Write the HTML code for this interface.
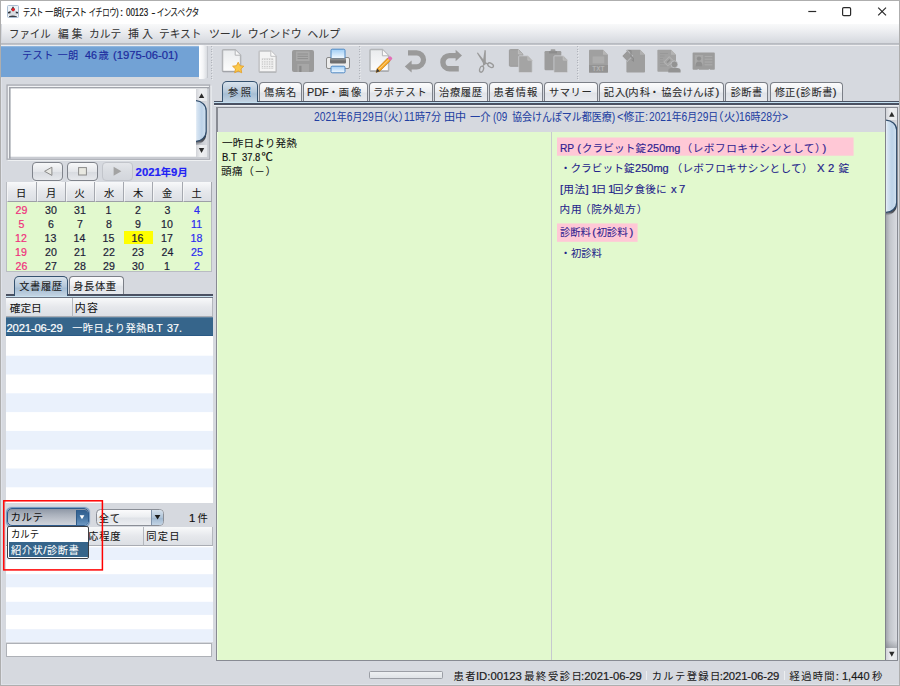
<!DOCTYPE html>
<html lang="ja">
<head>
<meta charset="utf-8">
<title>テスト 一朗(テスト イチロウ) : 00123 - インスペクタ</title>
<style>
*{box-sizing:border-box;margin:0;padding:0}
html,body{width:900px;height:686px;overflow:hidden;background:#d6d9df}
body{position:relative;font-family:"Liberation Sans","Noto Sans CJK JP",sans-serif;font-size:11.3px;color:#000;line-height:1}
body>div,body>span,body>svg{position:absolute}
span{white-space:pre;line-height:1;-webkit-text-stroke:0.2px currentColor}
.tab{border:1px solid #7b7f87;border-bottom:none;border-radius:4px 4px 0 0;background:linear-gradient(#fcfcfd 0%,#eceef1 45%,#e0e3e8 55%,#e9ebef 100%)}
.tabsel{border:1px solid #35526f;border-bottom:none;border-radius:5px 5px 0 0;background:linear-gradient(#d9e3ec 0%,#b4c7d9 50%,#a5bdd3 60%,#c3d3e2 100%)}
.th{background:linear-gradient(#f8f9fa 0%,#e6e8ec 50%,#dcdfe4 100%);border-right:1px solid #b4b7bd;border-bottom:1px solid #a9acb3}
.btn{border:1px solid #7f838b;border-radius:4px;background:linear-gradient(#f7f8f9 0%,#e4e6ea 50%,#d8dbe0 55%,#e6e8ec 100%);box-shadow:0 1px 0 rgba(255,255,255,.6)}
span b{-webkit-text-stroke:0.06px currentColor}

</style>
</head>
<body>
<div style="left:0px;top:0px;width:900px;height:686px;background:#d6d9df"></div>
<div style="left:1px;top:1px;width:898px;height:23px;background:#fff"></div>
<svg style="left:7px;top:5px" width="12" height="13" viewBox="0 0 12 13"><rect x="0.5" y="0.5" width="11" height="12" rx="1" fill="#eef3f8" stroke="#a9bdd2"/><path d="M6 1.5 L9 6 L10.5 10.5 L1.5 10.5 L3 6 Z" fill="#d9dde2"/><path d="M6 1.2 L8 4.5 L6 6.5 L4 4.5 Z" fill="#2b2f33"/><circle cx="6.2" cy="4.6" r="1.6" fill="#e8202a"/><path d="M1 7 L3.5 6 L3.5 8.2 L1 8.5 Z M8.8 6.5 L11 7 L11 8.6 L8.8 8.2 Z" fill="#30343a"/><path d="M2 11.2 Q6 9.6 10 11.6 L10 12 L2 12 Z" fill="#3a3e44"/></svg>
<span style="left:23.0px;top:7px;font-size:11.3px;transform:scaleX(0.746);transform-origin:0 0;color:#111;font-feature-settings:'palt';"><b style="font-weight:inherit;font-size:10.28px">テスト</b> </span>
<span style="left:45.2px;top:7px;font-size:11.3px;transform:scaleX(0.816);transform-origin:0 0;color:#111;font-feature-settings:'palt';"><b style="font-weight:inherit;font-size:10.28px">一朗</b>(<b style="font-weight:inherit;font-size:10.28px">テスト</b> </span>
<span style="left:89.1px;top:7px;font-size:11.3px;transform:scaleX(0.72);transform-origin:0 0;color:#111;font-feature-settings:'palt';"><b style="font-weight:inherit;font-size:10.28px">イチロウ</b>) </span>
<span style="left:120.1px;top:7px;font-size:11.3px;color:#111;font-feature-settings:'palt';">: </span>
<span style="left:126.3px;top:7px;font-size:11.3px;transform:scaleX(0.706);transform-origin:0 0;color:#111;font-feature-settings:'palt';">00123 </span>
<span style="left:151.6px;top:7px;font-size:11.3px;color:#111;font-feature-settings:'palt';">- </span>
<span style="left:157.4px;top:7px;font-size:11.3px;transform:scaleX(0.763);transform-origin:0 0;color:#111;font-feature-settings:'palt';"><b style="font-weight:inherit;font-size:10.28px">インスペクタ</b></span>
<svg style="left:800px;top:1px" width="99" height="23" viewBox="0 0 99 23"><g stroke="#2a2a2a" stroke-width="1.2" fill="none"><path d="M8.3 10.5 H16.2"/><rect x="42.6" y="6.6" width="8" height="8" rx="1.2"/><path d="M78.2 6.6 L86 14.4 M86 6.6 L78.2 14.4"/></g></svg>
<div style="left:2px;top:24px;width:897px;height:19px;background:linear-gradient(#f8f9fa 0%,#f1f2f4 25%,#e4e6ea 60%,#d5d8de 100%)"></div>
<div style="left:1px;top:43px;width:898px;height:2px;background:linear-gradient(#b4b7bd,#c3c6cc)"></div>
<div style="left:1px;top:45px;width:898px;height:1px;background:#eeeef0"></div>
<span style="left:9.0px;top:29px;font-size:11.3px;transform:scaleX(0.952);transform-origin:0 0;color:#333;"><b style="font-weight:inherit;font-size:10.96px">ファイル</b> </span>
<span style="left:57.6px;top:29px;font-size:11.3px;transform:scaleX(0.976);transform-origin:0 0;color:#333;"><b style="font-weight:inherit;font-size:10.96px">編</b> <b style="font-weight:inherit;font-size:10.96px">集</b> </span>
<span style="left:89.0px;top:29px;font-size:11.3px;transform:scaleX(0.981);transform-origin:0 0;color:#333;"><b style="font-weight:inherit;font-size:10.96px">カルテ</b> </span>
<span style="left:128px;top:29px;font-size:11.3px;color:#333;"><b style="font-weight:inherit;font-size:10.96px">挿</b> <b style="font-weight:inherit;font-size:10.96px">入</b> </span>
<span style="left:159.0px;top:29px;font-size:11.3px;transform:scaleX(0.976);transform-origin:0 0;color:#333;"><b style="font-weight:inherit;font-size:10.96px">テキスト</b> </span>
<span style="left:209px;top:29px;font-size:11.3px;letter-spacing:-0.1px;color:#333;"><b style="font-weight:inherit;font-size:10.96px">ツール</b> </span>
<span style="left:247.8px;top:29px;font-size:11.3px;letter-spacing:-0.2px;color:#333;"><b style="font-weight:inherit;font-size:10.96px">ウインドウ</b> </span>
<span style="left:307.3px;top:29px;font-size:11.3px;letter-spacing:0.05px;color:#333;"><b style="font-weight:inherit;font-size:10.96px">ヘルプ</b></span>
<div style="left:1px;top:46px;width:198px;height:31px;background:linear-gradient(#9dbfe3 0,#72a2d5 1.6px,#72a2d5 100%)"></div>
<div style="left:199px;top:45px;width:8px;height:33.5px;border-radius:0 4px 4px 0;background:linear-gradient(90deg,#fff 0%,#f4f5f7 50%,#d9dce1 100%)"></div>
<span style="left:22px;top:50px;font-size:11.3px;letter-spacing:0.3px;color:#1c2a9e;"><b style="font-weight:inherit;font-size:10.28px">テスト</b> </span>
<span style="left:57.6px;top:50px;font-size:11.3px;letter-spacing:0.2px;color:#1c2a9e;"><b style="font-weight:inherit;font-size:10.28px">一朗</b>  </span>
<span style="left:85.0px;top:50px;font-size:11.3px;transform:scaleX(0.95);transform-origin:0 0;color:#1c2a9e;">46 </span>
<span style="left:98.6px;top:50px;font-size:11.3px;color:#1c2a9e;"><b style="font-weight:inherit;font-size:10.28px">歳</b> </span>
<span style="left:113px;top:50px;font-size:11.3px;letter-spacing:-0.03px;color:#1c2a9e;">(1975-06-01)</span>
<div style="left:207px;top:46px;width:1px;height:32px;background:#c3c6cc"></div>
<div style="left:211px;top:46px;width:1px;height:33px;background:repeating-linear-gradient(#b1b4bb 0,#b1b4bb 1px,transparent 1px,transparent 2.7px)"></div>
<div style="left:212px;top:46.5px;width:1px;height:33px;background:repeating-linear-gradient(#e6e8eb 0,#e6e8eb 1px,transparent 1px,transparent 2.7px)"></div>
<div style="left:359px;top:46px;width:1px;height:33px;background:repeating-linear-gradient(#b1b4bb 0,#b1b4bb 1px,transparent 1px,transparent 2.7px)"></div>
<div style="left:360px;top:46.5px;width:1px;height:33px;background:repeating-linear-gradient(#e6e8eb 0,#e6e8eb 1px,transparent 1px,transparent 2.7px)"></div>
<div style="left:577px;top:46px;width:1px;height:33px;background:repeating-linear-gradient(#b1b4bb 0,#b1b4bb 1px,transparent 1px,transparent 2.7px)"></div>
<div style="left:578px;top:46.5px;width:1px;height:33px;background:repeating-linear-gradient(#e6e8eb 0,#e6e8eb 1px,transparent 1px,transparent 2.7px)"></div>
<svg style="left:213px;top:45px" width="520" height="35" viewBox="213 45 520 35">
<defs>
<linearGradient id="gd" x1="0" y1="0" x2="0" y2="1"><stop offset="0" stop-color="#e9ebed"/><stop offset="1" stop-color="#fdfdfd"/></linearGradient>
<linearGradient id="gb" x1="0" y1="0" x2="0" y2="1"><stop offset="0" stop-color="#9fcdf5"/><stop offset="1" stop-color="#f4faff"/></linearGradient>
</defs>
<!-- 1 new doc with star -->
<path d="M223.6 49.8 H235.2 L240.6 55.2 V70.6 Q240.6 71.4 239.8 71.4 H223.6 Q222.5 71.4 222.5 70.6 V50.6 Q222.5 49.8 223.6 49.8 Z" fill="url(#gd)" stroke="#b2b4b7" stroke-width="1.5"/>
<path d="M222.6 71.6 H240.6" stroke="#a2a4a8" stroke-width="1.1"/>
<path d="M235.2 50 V55.2 H240.4" fill="#f8f8f8" stroke="#b2b4b7" stroke-width="1"/>
<path d="M238.2 62.2 L239.9 65.7 L243.8 66.2 L240.9 68.9 L241.7 72.8 L238.2 70.9 L234.7 72.8 L235.5 68.9 L232.6 66.2 L236.5 65.7 Z" fill="#fbc94a" stroke="#e5a02a" stroke-width="0.9" stroke-linejoin="round"/>
<!-- 2 doc pattern -->
<path d="M260.2 50.9 H270.8 L276.2 56.3 V71.2 Q276.2 72 275.4 72 H260.2 Q259.1 72 259.1 71.2 V51.7 Q259.1 50.9 260.2 50.9 Z" fill="#f4f4f4" stroke="#c0c1c4" stroke-width="1.5"/>
<path d="M259.2 72.2 H276.2" stroke="#b0b2b6" stroke-width="1"/>
<path d="M270.8 51 V56.3 H276" fill="#fbfbfb" stroke="#c0c1c4" stroke-width="1"/>
<rect x="261.8" y="58.4" width="11.4" height="10.4" fill="#c9c9c9"/>
<path d="M261.8 60.6 H273.2 M261.8 63 H273.2 M261.8 65.4 H273.2 M261.8 67.8 H273.2 M263.6 58.4 V68.8 M266 58.4 V68.8 M268.4 58.4 V68.8 M270.8 58.4 V68.8" stroke="#eeeeee" stroke-width="1.1"/>
<!-- 3 floppy -->
<rect x="292" y="50" width="22" height="22" rx="2" fill="#9a9a9a"/>
<rect x="296" y="51.5" width="13.5" height="9.5" fill="#a9a9a9"/>
<path d="M297.5 54 H308 M297.5 56.3 H308 M297.5 58.6 H308" stroke="#8f8f8f" stroke-width="1"/>
<rect x="297.3" y="64" width="11.7" height="8" fill="#a6a6a6"/>
<rect x="299.2" y="65.8" width="2.3" height="6.2" fill="#8a8a8a"/>
<!-- 4 printer -->
<rect x="326.5" y="57.5" width="23" height="11" rx="1.5" fill="#ececec" stroke="#8a8a8a" stroke-width="1"/>
<rect x="331" y="49.2" width="14" height="9.3" rx="1.2" fill="url(#gb)" stroke="#4d88c4" stroke-width="1"/>
<rect x="330" y="58.4" width="16" height="5.2" rx="1" fill="#6e6e6e"/>
<rect x="330" y="58.4" width="16" height="2" fill="#8a8a8a"/>
<rect x="331" y="66.2" width="14" height="6.6" rx="1.2" fill="url(#gb)" stroke="#4d88c4" stroke-width="1"/>
<!-- 5 pencil doc -->
<path d="M371 49.6 H382.4 L388.6 55.8 V70.2 Q388.6 71 387.8 71 H371 Q370 71 370 70.2 V50.4 Q370 49.6 371 49.6 Z" fill="url(#gd)" stroke="#b4b6b9" stroke-width="1.5"/>
<path d="M370 71.2 H388.6" stroke="#a4a6aa" stroke-width="1"/>
<path d="M382.4 49.8 V55.8 H388.4" fill="#f8f8f8" stroke="#b4b6b9" stroke-width="1"/>
<path d="M376 72.4 L377.2 68.6 L387.6 58 L390.4 60.8 L379.8 71.2 Z" fill="#f5a623" stroke="#b87410" stroke-width="0.6"/>
<path d="M378.6 69.6 L389 59.4" stroke="#ffe0a0" stroke-width="0.9"/>
<path d="M387.6 58 L389.2 56.4 Q390 55.8 390.8 56.6 L392 57.8 Q392.6 58.6 392 59.3 L390.4 60.8 Z" fill="#e36fb8"/>
<path d="M376 72.4 L377.2 68.6 L379.8 71.2 Z" fill="#3a3a3a"/>
<!-- 6 undo -->
<path d="M408 52.8 H416.5 A7 7 0 0 1 416.5 66.8 H410" fill="none" stroke="#9a9a9a" stroke-width="5.2"/>
<path d="M404.8 66.6 L411.6 60.4 V72.4 Z" fill="#9a9a9a"/>
<!-- 7 redo -->
<path d="M458.8 68.8 H449.5 A6.5 6.5 0 0 1 449.5 55.6 H456.5" fill="none" stroke="#9a9a9a" stroke-width="5.4"/>
<path d="M462 55.4 L455.6 49.8 V61.2 Z" fill="#9a9a9a"/>
<!-- 8 scissors -->
<path d="M477 53.2 Q477.6 51.8 478.6 53.4 L486.4 63.2 L484.6 65.4 Z" fill="#9a9a9a"/>
<path d="M484.6 50 Q485.8 49.6 485.8 51.2 L485.8 62.6 L483.2 66.2 L482.8 62 Z" fill="#9a9a9a"/>
<ellipse cx="481.6" cy="69.2" rx="1.9" ry="3.1" transform="rotate(18 481.6 69.2)" fill="none" stroke="#9a9a9a" stroke-width="1.3"/>
<ellipse cx="490.6" cy="65.2" rx="3.1" ry="1.9" transform="rotate(32 490.6 65.2)" fill="none" stroke="#9a9a9a" stroke-width="1.3"/>
<path d="M483.4 65.4 L482.4 67 M485.6 63.2 L488.2 64" stroke="#9a9a9a" stroke-width="1.4"/>
<!-- 9 copy -->
<path d="M510.3 49.6 H518.4 L522.8 54 V65.4 Q522.8 66.3 521.9 66.3 H510.3 Q509.4 66.3 509.4 65.4 V50.5 Q509.4 49.6 510.3 49.6 Z" fill="#a4a4a4" stroke="#989898" stroke-width="0.9"/>
<path d="M518.4 49.6 V54 H522.8" fill="#b4b4b4" stroke="#cfcfcf" stroke-width="0.5"/>
<path d="M519.6 55.8 H527.8 L532.2 60.2 V71.6 Q532.2 72.5 531.3 72.5 H519.6 Q518.7 72.5 518.7 71.6 V56.7 Q518.7 55.8 519.6 55.8 Z" fill="#a4a4a4" stroke="#d2d4d8" stroke-width="0.7"/>
<path d="M527.8 55.8 V60.2 H532.2" fill="#b4b4b4" stroke="#cfcfcf" stroke-width="0.5"/>
<!-- 10 paste -->
<rect x="544.5" y="51" width="16.8" height="19.2" rx="1.2" fill="#9c9c9c"/>
<rect x="550.6" y="49.3" width="4.8" height="3.2" rx="0.8" fill="#9c9c9c"/>
<rect x="549" y="51.2" width="8" height="2.2" fill="#8c8c8c"/>
<path d="M554.8 55.8 H563.2 L567.6 60.2 V71.6 Q567.6 72.5 566.7 72.5 H554.8 Q553.9 72.5 553.9 71.6 V56.7 Q553.9 55.8 554.8 55.8 Z" fill="#a4a4a4" stroke="#d2d4d8" stroke-width="0.7"/>
<path d="M563.2 55.8 V60.2 H567.6" fill="#b4b4b4" stroke="#cfcfcf" stroke-width="0.5"/>
<!-- 11 TXT -->
<path d="M589.8 49.8 H603 L607.9 54.7 V71.8 Q607.9 72.6 607.1 72.6 H589.8 Q589 72.6 589 71.8 V50.6 Q589 49.8 589.8 49.8 Z" fill="#a0a0a0"/>
<path d="M603 49.8 V54.7 H607.9" fill="#b6b6b6"/>
<rect x="592.6" y="56.4" width="11.6" height="7" fill="#adadad"/>
<rect x="589" y="65" width="18.9" height="7.6" fill="#939393"/>
<text x="598.4" y="71.4" font-family="'Liberation Sans',sans-serif" font-size="6.4" font-weight="bold" fill="#b4b4b4" text-anchor="middle">TXT</text>
<!-- 12 doc with bucket -->
<path d="M627.2 49.8 H640 L645 54.8 V71.8 Q645 72.6 644.2 72.6 H627.2 Q626.4 72.6 626.4 71.8 V50.6 Q626.4 49.8 627.2 49.8 Z" fill="#9e9e9e"/>
<path d="M640 49.8 V54.8 H645" fill="#b0b0b0"/>
<path d="M627.4 50.6 L632.6 56 L627.2 61.4 L622 56 Z" fill="#9a9a9a" stroke="#d6d9df" stroke-width="0.6"/>
<path d="M628.6 50.2 L631 51 L631 56.5 L633.4 58.5 L633.4 61 L631.6 59.6" fill="none" stroke="#8a8a8a" stroke-width="1.1"/>
<!-- 13 doc with person -->
<path d="M658.2 49.8 H671 L676 54.8 V70.9 Q676 71.7 675.2 71.7 H658.2 Q657.4 71.7 657.4 70.9 V50.6 Q657.4 49.8 658.2 49.8 Z" fill="#a2a2a2"/>
<path d="M671 49.8 V54.8 H676" fill="#b4b4b4"/>
<path d="M660 53.5 H668 M660 56 H664.5 M660 58.5 H663 M660 61 H663 M660 63.5 H664 M660 66 H667" stroke="#979797" stroke-width="0.9"/>
<path d="M669.2 56.6 L673.2 60.6 L667.8 66 L663.8 62 Z" fill="#a6a6a6" stroke="#b9b9b9" stroke-width="0.8"/>
<path d="M667 62.6 L670 59.6" stroke="#8f8f8f" stroke-width="1.6"/>
<circle cx="674.4" cy="64.4" r="3.4" fill="#939393" stroke="#d6d9df" stroke-width="0.5"/>
<path d="M668.3 72.6 V70.6 Q668.3 68 671.4 68 H677.4 Q680.6 68 680.6 70.6 V72.6 Z" fill="#939393"/>
<!-- 14 id card -->
<path d="M693.4 52.4 H714 Q714.8 52.4 714.8 53.2 V69 Q714.8 69.8 714 69.8 H710.2 Q709.4 68.2 708.6 69.8 H699 Q698.2 68.2 697.4 69.8 H693.4 Q692.6 69.8 692.6 69 V53.2 Q692.6 52.4 693.4 52.4 Z" fill="#9c9c9c"/>
<rect x="694.8" y="55" width="8.4" height="11.4" fill="#a8a8a8"/>
<circle cx="699" cy="58.6" r="2.2" fill="#909090"/>
<path d="M695.4 66.4 Q695.4 61.6 699 61.6 Q702.6 61.6 702.6 66.4 Z" fill="#909090"/>
<path d="M704.6 56.4 H712.4 M704.6 59.2 H712.4 M704.6 62 H712.4 M704.6 64.8 H712.4" stroke="#adadad" stroke-width="1"/>
</svg>

<div class="tabsel" style="left:222px;top:81px;width:36px;height:21px;"></div>
<div class="tab" style="left:259px;top:82px;width:43px;height:19.6px;"></div>
<div class="tab" style="left:303px;top:82px;width:65px;height:19.6px;"></div>
<div class="tab" style="left:369px;top:82px;width:64px;height:19.6px;"></div>
<div class="tab" style="left:434px;top:82px;width:54px;height:19.6px;"></div>
<div class="tab" style="left:489px;top:82px;width:54px;height:19.6px;"></div>
<div class="tab" style="left:544px;top:82px;width:54px;height:19.6px;"></div>
<div class="tab" style="left:599px;top:82px;width:125px;height:19.6px;"></div>
<div class="tab" style="left:725px;top:82px;width:43px;height:19.6px;"></div>
<div class="tab" style="left:770px;top:82px;width:73px;height:19.6px;"></div>
<span style="left:228.1px;top:87px;font-size:11.3px;color:#2a2a2a;"><b style="font-weight:inherit;font-size:10.28px">参</b> </span>
<span style="left:240.7px;top:87px;font-size:11.3px;color:#2a2a2a;"><b style="font-weight:inherit;font-size:10.28px">照</b></span>
<span style="left:263.9px;top:87px;font-size:11.3px;letter-spacing:0.75px;color:#2a2a2a;"><b style="font-weight:inherit;font-size:10.28px">傷病名</b></span>
<span style="left:307.1px;top:87px;font-size:11.3px;transform:scaleX(0.959);transform-origin:0 0;color:#2a2a2a;">PDF</span>
<span style="left:328.3px;top:87px;font-size:11.3px;color:#2a2a2a;"><b style="font-weight:inherit;font-size:10.28px">・</b></span>
<span style="left:338.7px;top:87px;font-size:11.3px;letter-spacing:2.0px;color:#2a2a2a;"><b style="font-weight:inherit;font-size:10.28px">画像</b></span>
<span style="left:372.9px;top:87px;font-size:11.3px;letter-spacing:0.62px;color:#2a2a2a;"><b style="font-weight:inherit;font-size:10.28px">ラボテスト</b></span>
<span style="left:439px;top:87px;font-size:11.3px;letter-spacing:0.67px;color:#2a2a2a;"><b style="font-weight:inherit;font-size:10.28px">治療履歴</b></span>
<span style="left:493.4px;top:87px;font-size:11.3px;letter-spacing:0.94px;color:#2a2a2a;"><b style="font-weight:inherit;font-size:10.28px">患者情報</b></span>
<span style="left:549px;top:87px;font-size:11.3px;letter-spacing:0.53px;color:#2a2a2a;"><b style="font-weight:inherit;font-size:10.28px">サマリー</b></span>
<span style="left:603.8px;top:87px;font-size:11.3px;letter-spacing:1.0px;color:#2a2a2a;"><b style="font-weight:inherit;font-size:10.28px">記入</b></span>
<span style="left:624.9px;top:87px;font-size:11.3px;color:#2a2a2a;">(</span>
<span style="left:628.3px;top:87px;font-size:11.3px;letter-spacing:1.2px;color:#2a2a2a;"><b style="font-weight:inherit;font-size:10.28px">内科</b></span>
<span style="left:649.2px;top:87px;font-size:11.3px;color:#2a2a2a;"><b style="font-weight:inherit;font-size:10.28px">・</b></span>
<span style="left:661.3px;top:87px;font-size:11.3px;letter-spacing:0.4px;color:#2a2a2a;"><b style="font-weight:inherit;font-size:10.28px">協会けんぽ</b></span>
<span style="left:715.4px;top:87px;font-size:11.3px;color:#2a2a2a;">)</span>
<span style="left:730.8px;top:87px;font-size:11.3px;letter-spacing:0.3px;color:#2a2a2a;"><b style="font-weight:inherit;font-size:10.28px">診断書</b></span>
<span style="left:774.7px;top:87px;font-size:11.3px;letter-spacing:0.1px;color:#2a2a2a;"><b style="font-weight:inherit;font-size:10.28px">修正</b></span>
<span style="left:796px;top:87px;font-size:11.3px;color:#2a2a2a;">(</span>
<span style="left:800.6px;top:87px;font-size:11.3px;letter-spacing:0.6px;color:#2a2a2a;"><b style="font-weight:inherit;font-size:10.28px">診断書</b></span>
<span style="left:832.8px;top:87px;font-size:11.3px;color:#2a2a2a;">)</span>
<div style="left:214px;top:100.6px;width:8px;height:1.4px;background:#4a5162"></div>
<div style="left:258px;top:100.6px;width:641px;height:1.4px;background:#4a5162"></div>
<div style="left:214px;top:102px;width:685px;height:1px;background:#c3dff0"></div>
<div style="left:214px;top:103px;width:685px;height:2px;background:linear-gradient(#4a5162 0,#4a5162 1.6px,#9a9eaa 2px)"></div>
<div style="left:214px;top:105px;width:685px;height:1px;background:#eceef1"></div>
<div style="left:216px;top:106.5px;width:682px;height:554.5px;background:#888b93"></div>
<div style="left:217.5px;top:107.5px;width:668px;height:552.5px;background:#d6d9df"></div>
<div style="left:217px;top:131.6px;width:333.5px;height:528.4px;background:linear-gradient(90deg,#eefcdf 0,#eefcdf 1.2px,#e2f9ce 1.2px)"></div>
<div style="left:550.5px;top:131.6px;width:1.5px;height:528.4px;background:#c6c9cf"></div>
<div style="left:552px;top:131.6px;width:333px;height:528.4px;background:#e2f9ce"></div>
<span style="left:313.8px;top:112px;font-size:11.9px;transform:scaleX(0.863);transform-origin:0 0;color:#2340a2;-webkit-text-stroke:0;">2021<b style="font-weight:inherit;font-size:11.42px">年</b>6<b style="font-weight:inherit;font-size:11.42px">月</b>29<b style="font-weight:inherit;font-size:11.42px">日</b></span>
<span style="left:377.4px;top:112px;font-size:11.9px;transform:scaleX(0.944);transform-origin:0 0;color:#2340a2;-webkit-text-stroke:0;"><b style="font-weight:inherit;font-size:11.42px">（火）</b></span>
<span style="left:404.1px;top:112px;font-size:11.9px;transform:scaleX(0.885);transform-origin:0 0;color:#2340a2;-webkit-text-stroke:0;">11<b style="font-weight:inherit;font-size:11.42px">時</b>7<b style="font-weight:inherit;font-size:11.42px">分</b> </span>
<span style="left:444.0px;top:112px;font-size:11.9px;transform:scaleX(0.967);transform-origin:0 0;color:#2340a2;-webkit-text-stroke:0;"><b style="font-weight:inherit;font-size:11.42px">田中</b> </span>
<span style="left:470.0px;top:112px;font-size:11.9px;transform:scaleX(0.895);transform-origin:0 0;color:#2340a2;-webkit-text-stroke:0;"><b style="font-weight:inherit;font-size:11.42px">一介</b> </span>
<span style="left:493.4px;top:112px;font-size:11.9px;transform:scaleX(0.831);transform-origin:0 0;color:#2340a2;-webkit-text-stroke:0;">(09 </span>
<span style="left:512.0px;top:112px;font-size:11.9px;transform:scaleX(0.874);transform-origin:0 0;color:#2340a2;-webkit-text-stroke:0;"><b style="font-weight:inherit;font-size:11.42px">協会けんぽマル都医療</b>)</span>
<span style="left:617.0px;top:112px;font-size:11.9px;transform:scaleX(0.938);transform-origin:0 0;color:#2340a2;-webkit-text-stroke:0;">&lt;<b style="font-weight:inherit;font-size:11.42px">修正</b>:</span>
<span style="left:649.2px;top:112px;font-size:11.9px;transform:scaleX(0.858);transform-origin:0 0;color:#2340a2;-webkit-text-stroke:0;">2021<b style="font-weight:inherit;font-size:11.42px">年</b>6<b style="font-weight:inherit;font-size:11.42px">月</b>29<b style="font-weight:inherit;font-size:11.42px">日</b></span>
<span style="left:711.8px;top:112px;font-size:11.9px;transform:scaleX(1.022);transform-origin:0 0;color:#2340a2;-webkit-text-stroke:0;"><b style="font-weight:inherit;font-size:11.42px">（火）</b></span>
<span style="left:738.7px;top:112px;font-size:11.9px;transform:scaleX(0.873);transform-origin:0 0;color:#2340a2;-webkit-text-stroke:0;">16<b style="font-weight:inherit;font-size:11.42px">時</b>28<b style="font-weight:inherit;font-size:11.42px">分</b>&gt;</span>
<span style="left:222px;top:138px;font-size:11.3px;letter-spacing:0.15px;color:#111;"><b style="font-weight:inherit;font-size:10.62px">一昨日より発熱</b></span>
<span style="left:221.7px;top:152px;font-size:11.3px;transform:scaleX(0.841);transform-origin:0 0;color:#111;">B.T </span>
<span style="left:241.7px;top:152px;font-size:11.3px;transform:scaleX(0.832);transform-origin:0 0;color:#111;">37.8</span>
<span style="left:261.4px;top:152px;font-size:11.3px;color:#111;">℃</span>
<span style="left:221px;top:166px;font-size:11.3px;letter-spacing:0.51px;color:#111;"><b style="font-weight:inherit;font-size:10.62px">頭痛（－）</b></span>
<svg style="left:556px;top:136px" width="300" height="108" viewBox="556 136 300 108"><rect x="557" y="137.5" width="296.6" height="18.2" fill="#ffc8d6"/><rect x="557" y="223.4" width="80.6" height="18.4" fill="#ffc8d6"/></svg>
<span style="left:560.0px;top:143px;font-size:11.3px;transform:scaleX(0.9);transform-origin:0 0;color:#301e90;">RP </span>
<span style="left:577.3px;top:143px;font-size:11.3px;color:#301e90;">(</span>
<span style="left:581.8px;top:143px;font-size:11.3px;letter-spacing:0.12px;color:#301e90;"><b style="font-weight:inherit;font-size:10.62px">クラビット錠</b></span>
<span style="left:646.6px;top:143px;font-size:11.3px;transform:scaleX(0.965);transform-origin:0 0;color:#301e90;">250mg </span>
<span style="left:681.6px;top:143px;font-size:11.3px;letter-spacing:0.53px;color:#301e90;"><b style="font-weight:inherit;font-size:10.62px">（レボフロキサシンとして）</b></span>
<span style="left:822.4px;top:143px;font-size:11.3px;color:#301e90;">)</span>
<span style="left:560.3px;top:163px;font-size:11.3px;color:#22228a;"><b style="font-weight:inherit;font-size:10.62px">・</b></span>
<span style="left:570.4px;top:163px;font-size:11.3px;letter-spacing:0.12px;color:#22228a;"><b style="font-weight:inherit;font-size:10.62px">クラビット錠</b></span>
<span style="left:635.3px;top:163px;font-size:11.3px;transform:scaleX(0.976);transform-origin:0 0;color:#22228a;">250mg </span>
<span style="left:671.6px;top:163px;font-size:11.3px;letter-spacing:0.28px;color:#22228a;"><b style="font-weight:inherit;font-size:10.62px">（レボフロキサシンとして）</b>  </span>
<span style="left:817px;top:163px;font-size:11.3px;color:#22228a;">X </span>
<span style="left:828px;top:163px;font-size:11.3px;color:#22228a;">2  </span>
<span style="left:838.4px;top:163px;font-size:11.3px;color:#22228a;"><b style="font-weight:inherit;font-size:10.62px">錠</b></span>
<span style="left:559.9px;top:184px;font-size:11.3px;color:#22228a;">[</span>
<span style="left:563.3px;top:184px;font-size:11.3px;letter-spacing:0.6px;color:#22228a;"><b style="font-weight:inherit;font-size:10.62px">用法</b></span>
<span style="left:585.4px;top:184px;font-size:11.3px;color:#22228a;">] </span>
<span style="left:591.6px;top:184px;font-size:11.3px;color:#22228a;">1</span>
<span style="left:595.8px;top:184px;font-size:11.3px;color:#22228a;"><b style="font-weight:inherit;font-size:10.62px">日</b></span>
<span style="left:607.9px;top:184px;font-size:11.3px;color:#22228a;">1</span>
<span style="left:612.8px;top:184px;font-size:11.3px;letter-spacing:0.19px;color:#22228a;"><b style="font-weight:inherit;font-size:10.62px">回夕食後に</b> </span>
<span style="left:670.9px;top:184px;font-size:11.3px;color:#22228a;">x </span>
<span style="left:679.1px;top:184px;font-size:11.3px;color:#22228a;">7</span>
<span style="left:559.4px;top:204px;font-size:11.3px;letter-spacing:0.9px;color:#22228a;"><b style="font-weight:inherit;font-size:10.62px">内用</b></span>
<span style="left:579.9px;top:204px;font-size:11.3px;letter-spacing:0.74px;color:#22228a;"><b style="font-weight:inherit;font-size:10.62px">（院外処方）</b></span>
<span style="left:560.4px;top:227px;font-size:11.3px;transform:scaleX(0.972);transform-origin:0 0;color:#301e90;"><b style="font-weight:inherit;font-size:10.62px">診断料</b></span>
<span style="left:592.3px;top:227px;font-size:11.3px;color:#301e90;">(</span>
<span style="left:596.4px;top:227px;font-size:11.3px;letter-spacing:-0.15px;color:#301e90;"><b style="font-weight:inherit;font-size:10.62px">初診料</b></span>
<span style="left:629.4px;top:227px;font-size:11.3px;color:#301e90;">)</span>
<span style="left:560.3px;top:248px;font-size:11.3px;color:#22228a;"><b style="font-weight:inherit;font-size:10.62px">・</b></span>
<span style="left:571.3px;top:248px;font-size:11.3px;transform:scaleX(0.972);transform-origin:0 0;color:#22228a;"><b style="font-weight:inherit;font-size:10.62px">初診料</b></span>
<div style="left:885px;top:107.5px;width:1px;height:552.5px;background:#80838c"></div>
<div style="left:885.8px;top:107.5px;width:11.6px;height:552.5px;background:linear-gradient(90deg,#a4a7ae 0%,#c3c6cc 35%,#d9dbe0 100%)"></div>
<div style="left:885.8px;top:107.5px;width:11.6px;height:12.5px;background:linear-gradient(90deg,#d2d4d9 0%,#eff0f2 45%,#e6e8eb 100%)"></div>
<div style="left:885.8px;top:647.5px;width:11.6px;height:12.5px;background:linear-gradient(90deg,#d2d4d9 0%,#eff0f2 45%,#e6e8eb 100%)"></div>
<svg style="left:885.8px;top:107.5px" width="11.6" height="552.5" viewBox="0 0 11.6 552.5"><defs><linearGradient id="sg" x1="0" y1="0" x2="1" y2="0"><stop offset="0" stop-color="#f3f7fb"/><stop offset="0.22" stop-color="#d5e3f1"/><stop offset="0.6" stop-color="#bcd2e8"/><stop offset="1" stop-color="#d3e2f0"/></linearGradient><linearGradient id="sgs" gradientUnits="userSpaceOnUse" x1="0" y1="100.30000000000001" x2="0" y2="107.70000000000002"><stop offset="0" stop-color="#2e3138" stop-opacity="0.95"/><stop offset="0.55" stop-color="#3a3d45" stop-opacity="0.8"/><stop offset="1" stop-color="#7a7e86" stop-opacity="0.05"/></linearGradient></defs><path d="M3.0999999999999996 8.6 L8.5 8.6 L5.8 3.6 Z" fill="#2b2b2b"/><path d="M3.0999999999999996 543.9 L8.5 543.9 L5.8 548.9 Z" fill="#2b2b2b"/><path d="M-1 94.30000000000001 L10.7 94.30000000000001 L10.7 97.50000000000001 C10.7 103.00000000000001 5.885 107.50000000000001 -1 107.50000000000001 Z" fill="url(#sgs)"/><path d="M-1 11.900000000000006 C5.885 11.900000000000006 10.7 16.400000000000006 10.7 21.900000000000006 L10.7 94.30000000000001 C10.7 99.80000000000001 5.885 104.30000000000001 -1 104.30000000000001 Z" fill="url(#sg)" stroke="#2f4b6a" stroke-width="1.25"/></svg>
<div style="left:885.8px;top:640px;width:11.6px;height:7.5px;background:linear-gradient(rgba(90,94,102,0),rgba(90,94,102,.35))"></div>
<svg style="left:5px;top:82px" width="209" height="80" viewBox="5 82 209 80"><rect x="8.3" y="86.3" width="202.6" height="73.9" fill="none" stroke="#f3f4f6" stroke-width="1.3"/><rect x="7.05" y="85.05" width="202.55" height="74.15" fill="none" stroke="#a9acb3" stroke-width="1.3"/><rect x="9" y="87" width="200.2" height="71.7" fill="#c9ccd2"/><rect x="9" y="87" width="200.2" height="1.5" fill="#a1a4ab"/><rect x="9" y="87" width="1.7" height="71.7" fill="#a1a4ab"/><rect x="10.7" y="88.5" width="196.4" height="68.2" fill="#fff"/></svg>
<div style="left:196px;top:88.5px;width:11.1px;height:68.19999999999999px;background:linear-gradient(90deg,#a4a7ae 0%,#c3c6cc 35%,#d9dbe0 100%)"></div>
<div style="left:196px;top:88.5px;width:11.1px;height:12.2px;background:linear-gradient(90deg,#d2d4d9 0%,#eff0f2 45%,#e6e8eb 100%)"></div>
<div style="left:196px;top:144.5px;width:11.1px;height:12.2px;background:linear-gradient(90deg,#d2d4d9 0%,#eff0f2 45%,#e6e8eb 100%)"></div>
<svg style="left:196px;top:88.5px" width="11.1" height="68.19999999999999" viewBox="0 0 11.1 68.19999999999999"><defs><linearGradient id="sg2" x1="0" y1="0" x2="1" y2="0"><stop offset="0" stop-color="#f3f7fb"/><stop offset="0.22" stop-color="#d5e3f1"/><stop offset="0.6" stop-color="#bcd2e8"/><stop offset="1" stop-color="#d3e2f0"/></linearGradient><linearGradient id="sg2s" gradientUnits="userSpaceOnUse" x1="0" y1="48.30000000000001" x2="0" y2="55.70000000000001"><stop offset="0" stop-color="#2e3138" stop-opacity="0.95"/><stop offset="0.55" stop-color="#3a3d45" stop-opacity="0.8"/><stop offset="1" stop-color="#7a7e86" stop-opacity="0.05"/></linearGradient></defs><path d="M2.8499999999999996 9.1 L8.25 9.1 L5.55 4.3 Z" fill="#2b2b2b"/><path d="M2.8499999999999996 59.09999999999999 L8.25 59.09999999999999 L5.55 63.89999999999999 Z" fill="#2b2b2b"/><path d="M-1 42.30000000000001 L10.2 42.30000000000001 L10.2 45.500000000000014 C10.2 51.000000000000014 5.61 55.500000000000014 -1 55.500000000000014 Z" fill="url(#sg2s)"/><path d="M-1 11.700000000000003 C5.61 11.700000000000003 10.2 16.200000000000003 10.2 21.700000000000003 L10.2 42.30000000000001 C10.2 47.80000000000001 5.61 52.30000000000001 -1 52.30000000000001 Z" fill="url(#sg2)" stroke="#2f4b6a" stroke-width="1.25"/></svg>
<div class="btn" style="left:32px;top:162px;width:31px;height:19px;"></div>
<div class="btn" style="left:67px;top:162px;width:31px;height:19px;"></div>
<div style="left:102px;top:162px;width:31px;height:19px;border:1px solid #c2c5cb;border-radius:4px;background:linear-gradient(#e4e6ea,#d9dce1 50%,#d3d6dc)"></div>
<svg style="left:30px;top:160px" width="105" height="24" viewBox="30 160 105 24"><path d="M51.9 167.2 L44.6 171.3 L51.9 175.4 Z" fill="#e9e9e4" stroke="#8a8a8a" stroke-width="1"/><rect x="78.6" y="167.6" width="7.8" height="7.4" fill="#e9e9e2" stroke="#8a8a8a" stroke-width="1"/><path d="M113.6 166.8 L121.4 171.3 L113.6 175.8 Z" fill="#a3a3a3"/></svg>
<span style="left:135.6px;top:167px;font-size:11.3px;letter-spacing:0.02px;color:#2222f4;font-weight:bold;">2021<b style="font-weight:inherit;font-size:10.28px">年</b>9<b style="font-weight:inherit;font-size:10.28px">月</b></span>
<div style="left:6px;top:182px;width:206px;height:90px;background:#e2f9ce;border:1px solid #b9bcc2"></div>
<div class="th" style="left:7px;top:182px;width:30px;height:20.4px;border-left:1px solid #f4f5f6;border-right:1px solid #a5a8af;border-bottom:1px solid #9da0a7"></div>
<div class="th" style="left:37px;top:182px;width:29px;height:20.4px;border-left:1px solid #f4f5f6;border-right:1px solid #a5a8af;border-bottom:1px solid #9da0a7"></div>
<div class="th" style="left:66px;top:182px;width:29px;height:20.4px;border-left:1px solid #f4f5f6;border-right:1px solid #a5a8af;border-bottom:1px solid #9da0a7"></div>
<div class="th" style="left:95px;top:182px;width:29px;height:20.4px;border-left:1px solid #f4f5f6;border-right:1px solid #a5a8af;border-bottom:1px solid #9da0a7"></div>
<div class="th" style="left:124px;top:182px;width:29px;height:20.4px;border-left:1px solid #f4f5f6;border-right:1px solid #a5a8af;border-bottom:1px solid #9da0a7"></div>
<div class="th" style="left:153px;top:182px;width:30px;height:20.4px;border-left:1px solid #f4f5f6;border-right:1px solid #a5a8af;border-bottom:1px solid #9da0a7"></div>
<div class="th" style="left:183px;top:182px;width:29px;height:20.4px;border-left:1px solid #f4f5f6;border-right:1px solid #a5a8af;border-bottom:1px solid #9da0a7"></div>
<span style="left:15.9px;top:188px;font-size:11.3px;color:#111;"><b style="font-weight:inherit;font-size:10.28px">日</b></span>
<span style="left:45.9px;top:188px;font-size:11.3px;color:#111;"><b style="font-weight:inherit;font-size:10.28px">月</b></span>
<span style="left:74.4px;top:188px;font-size:11.3px;color:#111;"><b style="font-weight:inherit;font-size:10.28px">火</b></span>
<span style="left:103.9px;top:188px;font-size:11.3px;color:#111;"><b style="font-weight:inherit;font-size:10.28px">水</b></span>
<span style="left:132.9px;top:188px;font-size:11.3px;color:#111;"><b style="font-weight:inherit;font-size:10.28px">木</b></span>
<span style="left:161.9px;top:188px;font-size:11.3px;color:#111;"><b style="font-weight:inherit;font-size:10.28px">金</b></span>
<span style="left:191.4px;top:188px;font-size:11.3px;color:#111;"><b style="font-weight:inherit;font-size:10.28px">土</b></span>
<div style="left:123.6px;top:230.6px;width:29px;height:13.5px;background:#ffff00"></div>
<span style="left:15.6px;top:205px;font-size:10.6px;color:#f0307c;">29</span>
<span style="left:45.1px;top:205px;font-size:10.6px;color:#1c1c38;">30</span>
<span style="left:74.1px;top:205px;font-size:10.6px;color:#1c1c38;">31</span>
<span style="left:105.6px;top:205px;font-size:10.6px;color:#1c1c38;">1</span>
<span style="left:135.1px;top:205px;font-size:10.6px;color:#1c1c38;">2</span>
<span style="left:164.6px;top:205px;font-size:10.6px;color:#1c1c38;">3</span>
<span style="left:194.1px;top:205px;font-size:10.6px;color:#2a2af0;">4</span>
<span style="left:18.6px;top:219px;font-size:10.6px;color:#f0307c;">5</span>
<span style="left:48.1px;top:219px;font-size:10.6px;color:#1c1c38;">6</span>
<span style="left:77.1px;top:219px;font-size:10.6px;color:#1c1c38;">7</span>
<span style="left:106.1px;top:219px;font-size:10.6px;color:#1c1c38;">8</span>
<span style="left:135.1px;top:219px;font-size:10.6px;color:#1c1c38;">9</span>
<span style="left:161.1px;top:219px;font-size:10.6px;color:#1c1c38;">10</span>
<span style="left:191.1px;top:219px;font-size:10.6px;color:#2a2af0;">11</span>
<span style="left:15.1px;top:233px;font-size:10.6px;color:#f0307c;">12</span>
<span style="left:44.6px;top:233px;font-size:10.6px;color:#1c1c38;">13</span>
<span style="left:73.6px;top:233px;font-size:10.6px;color:#1c1c38;">14</span>
<span style="left:102.6px;top:233px;font-size:10.6px;color:#1c1c38;">15</span>
<span style="left:131.6px;top:233px;font-size:10.6px;color:#1c1c38;">16</span>
<span style="left:161.1px;top:233px;font-size:10.6px;color:#1c1c38;">17</span>
<span style="left:190.6px;top:233px;font-size:10.6px;color:#2a2af0;">18</span>
<span style="left:15.1px;top:247px;font-size:10.6px;color:#f0307c;">19</span>
<span style="left:45.1px;top:247px;font-size:10.6px;color:#1c1c38;">20</span>
<span style="left:74.1px;top:247px;font-size:10.6px;color:#1c1c38;">21</span>
<span style="left:103.1px;top:247px;font-size:10.6px;color:#1c1c38;">22</span>
<span style="left:132.1px;top:247px;font-size:10.6px;color:#1c1c38;">23</span>
<span style="left:161.6px;top:247px;font-size:10.6px;color:#1c1c38;">24</span>
<span style="left:191.1px;top:247px;font-size:10.6px;color:#2a2af0;">25</span>
<span style="left:15.6px;top:261px;font-size:10.6px;color:#f0307c;">26</span>
<span style="left:45.1px;top:261px;font-size:10.6px;color:#1c1c38;">27</span>
<span style="left:74.1px;top:261px;font-size:10.6px;color:#1c1c38;">28</span>
<span style="left:103.1px;top:261px;font-size:10.6px;color:#1c1c38;">29</span>
<span style="left:132.1px;top:261px;font-size:10.6px;color:#1c1c38;">30</span>
<span style="left:164.1px;top:261px;font-size:10.6px;color:#1c1c38;">1</span>
<span style="left:194.1px;top:261px;font-size:10.6px;color:#2a2af0;">2</span>
<div class="tab" style="left:69px;top:276.2px;width:54.6px;height:18.6px;"></div>
<div class="tabsel" style="left:13.8px;top:275.6px;width:54.4px;height:20.4px;"></div>
<span style="left:19.2px;top:281px;font-size:11.3px;letter-spacing:0.6px;color:#1a1a1a;"><b style="font-weight:inherit;font-size:10.28px">文書履歴</b></span>
<span style="left:73.2px;top:281px;font-size:11.3px;letter-spacing:0.6px;color:#1a1a1a;"><b style="font-weight:inherit;font-size:10.28px">身長体重</b></span>
<div style="left:5.6px;top:294.4px;width:8.4px;height:1.4px;background:#4a5162"></div>
<div style="left:68px;top:294.4px;width:144.6px;height:1.4px;background:#4a5162"></div>
<div style="left:5.6px;top:295.8px;width:207px;height:1.2px;background:#c9e2f1"></div>
<div style="left:5.6px;top:297px;width:207px;height:1px;background:#6d7482"></div>
<div style="left:6px;top:298.2px;width:207px;height:205px;background:#fff"></div>
<div class="th" style="left:6px;top:298px;width:67px;height:18.6px;"></div>
<div class="th" style="left:73px;top:298px;width:140px;height:18.6px;"></div>
<span style="left:9.8px;top:303px;font-size:11.3px;letter-spacing:-0.1px;color:#111;"><b style="font-weight:inherit;font-size:10.73px">確定日</b></span>
<span style="left:74.8px;top:303px;font-size:11.3px;letter-spacing:1.2px;color:#111;"><b style="font-weight:inherit;font-size:10.96px">内容</b></span>
<svg style="left:6px;top:316px" width="207" height="188" viewBox="6 316 207 188"><rect x="6" y="317.2" width="207" height="18.8" fill="#36658b"/><rect x="6" y="335" width="207" height="1" fill="#2a5a85"/><rect x="6" y="355.7" width="207" height="18.8" fill="#eaf1fc"/><rect x="6" y="393.3" width="207" height="18.8" fill="#eaf1fc"/><rect x="6" y="430.9" width="207" height="18.8" fill="#eaf1fc"/><rect x="6" y="468.5" width="207" height="18.8" fill="#eaf1fc"/></svg>
<span style="left:6.4px;top:323px;font-size:11.3px;letter-spacing:-0.16px;color:#fff;">2021-06-29</span>
<span style="left:72.2px;top:323px;font-size:11.3px;letter-spacing:0.42px;color:#fff;"><b style="font-weight:inherit;font-size:10.28px">一昨日より発熱</b></span>
<span style="left:146.9px;top:323px;font-size:11.3px;transform:scaleX(0.894);transform-origin:0 0;color:#fff;">B.T </span>
<span style="left:167.2px;top:323px;font-size:11.3px;transform:scaleX(0.953);transform-origin:0 0;color:#fff;">37.</span>
<div class="th" style="left:6px;top:526.8px;width:207px;height:18.8px;"></div>
<div class="th" style="left:6px;top:526.8px;width:138px;height:18.8px;"></div>
<div style="left:6px;top:545.8px;width:207px;height:96px;background:#fff"></div>
<svg style="left:6px;top:546px" width="207" height="97" viewBox="6 546 207 97"><rect x="6" y="547.3" width="207" height="12.7" fill="#eaf1fc"/><rect x="6" y="574.2" width="207" height="13.1" fill="#eaf1fc"/><rect x="6" y="601.8" width="207" height="13.1" fill="#eaf1fc"/><rect x="6" y="629.2" width="207" height="12.6" fill="#eaf1fc"/></svg>
<span style="left:88px;top:531px;font-size:11.3px;letter-spacing:0.9px;color:#111;"><b style="font-weight:inherit;font-size:10.28px">応程度</b></span>
<span style="left:146.2px;top:531px;font-size:11.3px;letter-spacing:1.3px;color:#111;"><b style="font-weight:inherit;font-size:10.28px">同定日</b></span>
<div style="left:7px;top:508px;width:82px;height:18px;border:1px solid #2f5b8c;border-radius:5px;background:linear-gradient(#8f98a6 0%,#aab1bc 35%,#c0c5ce 70%,#d0d4db 100%);box-shadow:0 0 1px 0.5px #6f96c0"></div>
<div style="left:76.2px;top:509.6px;width:11.4px;height:15.2px;border-radius:0 3.5px 3.5px 0;border-left:1px solid #2e5a88;background:linear-gradient(#2f5d8d 0%,#3f6f9f 45%,#6c97c1 100%)"></div>
<svg style="left:78px;top:513px" width="8" height="8" viewBox="0 0 8 8"><path d="M1.6 2.2 L6.4 2.2 L4 6.3 Z" fill="#fff"/></svg>
<span style="left:10.6px;top:511px;font-size:11.6px;letter-spacing:0.4px;color:#111;"><b style="font-weight:inherit;font-size:10.56px">カルテ</b></span>
<div style="left:96.4px;top:509px;width:67.2px;height:16.6px;border:1px solid #8a8e96;border-radius:4.5px;background:linear-gradient(#fbfbfc 0%,#eceef1 45%,#dfe2e7 55%,#eceef1 100%)"></div>
<div style="left:151px;top:510px;width:11.6px;height:14.6px;border-radius:0 3.5px 3.5px 0;border-left:1px solid #7f93ab;background:linear-gradient(#d6e1ec 0%,#aec3d8 50%,#9fb8d1 55%,#c3d4e5 100%)"></div>
<svg style="left:153px;top:513px" width="9" height="8" viewBox="0 0 9 8"><path d="M1.7 2 L7.4 2 L4.55 6.6 Z" fill="#1c1c1c"/></svg>
<span style="left:98.8px;top:513px;font-size:11.3px;letter-spacing:0.6px;color:#111;"><b style="font-weight:inherit;font-size:10.28px">全て</b></span>
<span style="left:189px;top:513px;font-size:11.3px;color:#111;">1 </span>
<span style="left:197.4px;top:513px;font-size:11.3px;color:#111;"><b style="font-weight:inherit;font-size:10.28px">件</b></span>
<div style="left:7.4px;top:526px;width:81.4px;height:33.4px;border:1.2px solid #3c3f45;border-radius:2px;background:#fff"></div>
<div style="left:8.6px;top:542.2px;width:79px;height:15.2px;background:#36658b"></div>
<span style="left:10.7px;top:529px;font-size:11.3px;transform:scaleX(0.91);transform-origin:0 0;color:#111;"><b style="font-weight:inherit;font-size:10.28px">カルテ</b></span>
<span style="left:11px;top:545px;font-size:11.3px;letter-spacing:0.5px;color:#fff;"><b style="font-weight:inherit;font-size:10.28px">紹介状</b>/<b style="font-weight:inherit;font-size:10.28px">診断書</b></span>
<svg style="left:0;top:495px" width="110" height="80" viewBox="0 495 110 80"><rect x="3.8" y="500.8" width="98.6" height="69.1" fill="none" stroke="#ff0000" stroke-width="1.5"/></svg>
<div style="left:6.2px;top:642.6px;width:206px;height:14.6px;border:1px solid #aeb1b7;background:#fff"></div>
<div style="left:369.2px;top:671.2px;width:73.6px;height:7.8px;border:1px solid #9b9ea5;border-radius:1.5px;background:linear-gradient(#eef0f2,#dfe2e6)"></div>
<div style="left:646.2px;top:671px;width:1px;height:9.4px;background:#eceef0"></div>
<div style="left:784px;top:671px;width:1px;height:9.4px;background:#eceef0"></div>
<span style="left:453.4px;top:671px;font-size:11.3px;letter-spacing:1.7px;color:#1a1a1a;"><b style="font-weight:inherit;font-size:10.28px">患者</b></span>
<span style="left:476px;top:671px;font-size:11.3px;letter-spacing:-0.02px;color:#1a1a1a;">ID:00123 </span>
<span style="left:524.3px;top:671px;font-size:11.3px;letter-spacing:1.54px;color:#1a1a1a;"><b style="font-weight:inherit;font-size:10.28px">最終受診日</b></span>
<span style="left:581px;top:671px;font-size:11.3px;letter-spacing:-0.01px;color:#1a1a1a;">:2021-06-29 </span>
<span style="left:651.7px;top:671px;font-size:11.3px;letter-spacing:1.4px;color:#1a1a1a;"><b style="font-weight:inherit;font-size:10.28px">カルテ登録日</b></span>
<span style="left:719.7px;top:671px;font-size:11.3px;letter-spacing:-0.13px;color:#1a1a1a;">:2021-06-29 </span>
<span style="left:789.6px;top:671px;font-size:11.3px;letter-spacing:1.3px;color:#1a1a1a;"><b style="font-weight:inherit;font-size:10.28px">経過時間</b>: </span>
<span style="left:841.7px;top:671px;font-size:11.3px;transform:scaleX(0.974);transform-origin:0 0;color:#1a1a1a;">1,440 </span>
<span style="left:872px;top:671px;font-size:11.3px;color:#1a1a1a;"><b style="font-weight:inherit;font-size:10.28px">秒</b></span>
<div style="left:1px;top:684px;width:898px;height:1px;background:#dee1e8"></div>
<div style="left:1px;top:78px;width:1px;height:606px;background:#dfe2e9"></div>
<div style="left:0px;top:0px;width:900px;height:1px;background:#aeaeae"></div>
<div style="left:0px;top:0px;width:1px;height:686px;background:#aeaeae"></div>
<div style="left:899px;top:0px;width:1px;height:686px;background:#aeaeae"></div>
<div style="left:0px;top:685px;width:900px;height:1px;background:#aeaeae"></div>
</body>
</html>
